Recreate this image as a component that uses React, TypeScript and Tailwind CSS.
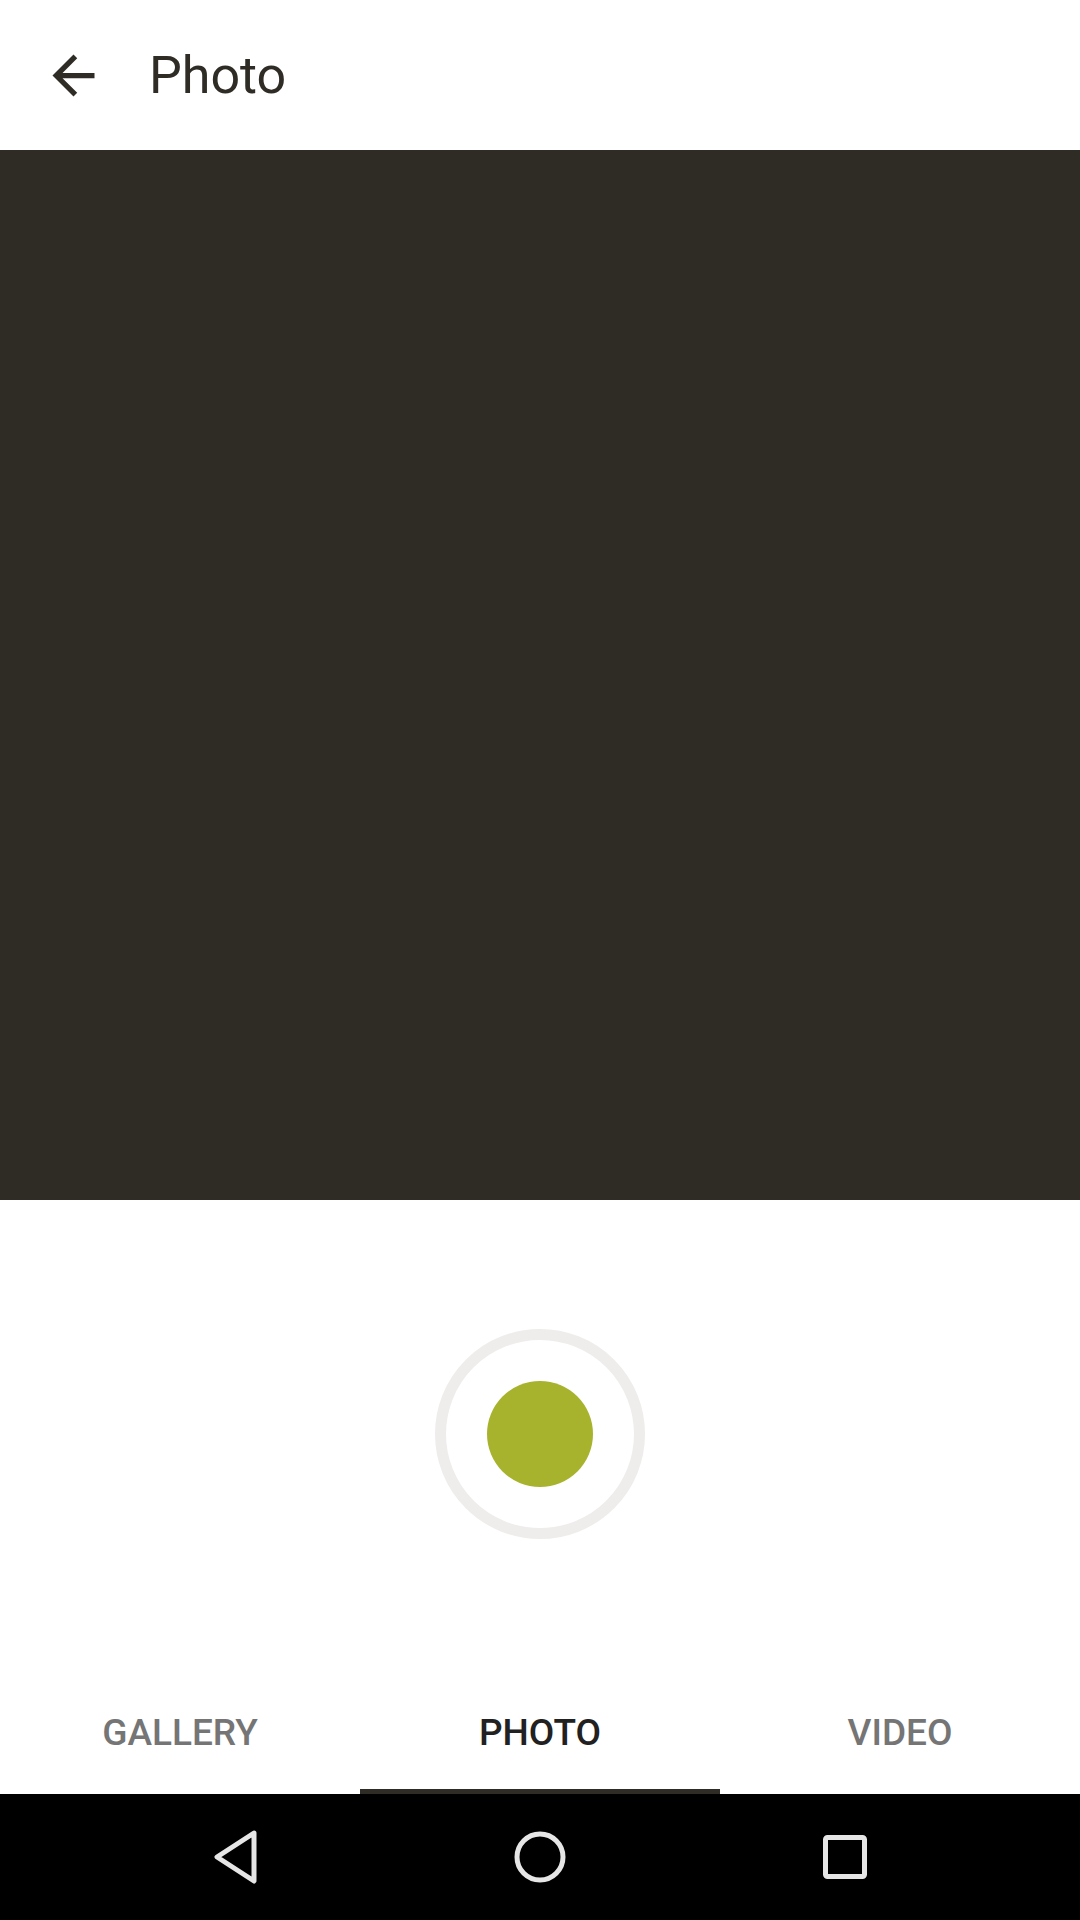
import React from "react";

export default function App() {
  return (
    <div className="w-[1080px] h-[1920px] flex flex-col bg-white overflow-hidden" style={{ fontFamily: "Roboto, 'Noto Sans', sans-serif" }}>
      <header className="h-[150px] flex items-center shrink-0 bg-white">
        <div className="w-[63px] h-[63px] ml-[42px] flex items-center justify-center">
          <svg viewBox="0 0 24 24" width="63" height="63" fill="#2f2c26">
            <path d="M20 11H7.83l5.59-5.59L12 4l-8 8 8 8 1.41-1.41L7.83 13H20v-2z" />
          </svg>
        </div>
        <h1 className="ml-[44px] text-[52px] leading-none text-[#2f2c26] font-normal pt-[2px]">Photo</h1>
      </header>
      <div className="h-[1050px] shrink-0 bg-[#2f2c26]" />
      <div className="flex-1 flex items-center justify-center bg-white">
        <div className="w-[210px] h-[210px] rounded-full border-[11px] border-[#eeedeb] flex items-center justify-center">
          <div className="w-[106px] h-[106px] rounded-full bg-[#a8b32d]" />
        </div>
      </div>
      <div className="h-[126px] shrink-0 grid grid-cols-3 bg-white">
        <div className="flex items-center justify-center pt-[3px]">
          <span className="text-[37px] font-medium leading-none text-[#757575]">GALLERY</span>
        </div>
        <div className="flex flex-col">
          <div className="flex-1 flex items-center justify-center pt-[8px]">
            <span className="text-[37px] font-medium leading-none text-[#212121]">PHOTO</span>
          </div>
          <div className="h-[5px] bg-[#2f2c26]" />
        </div>
        <div className="flex items-center justify-center pt-[3px]">
          <span className="text-[37px] font-medium leading-none text-[#757575]">VIDEO</span>
        </div>
      </div>
      <nav className="h-[126px] shrink-0 bg-black grid grid-cols-3">
        <div className="flex items-center justify-start pl-[213px]">
          <svg width="52" height="58" viewBox="0 0 52 58" fill="none" stroke="#e6e6e6" strokeWidth="5" strokeLinejoin="round" strokeLinecap="round">
            <path d="M41 5 L4 29 L41 53 Z" />
          </svg>
        </div>
        <div className="flex items-center justify-center">
          <svg width="56" height="56" viewBox="0 0 56 56" fill="none" stroke="#e6e6e6" strokeWidth="5">
            <circle cx="28" cy="28" r="23" />
          </svg>
        </div>
        <div className="flex items-center justify-start pl-[100px]">
          <svg width="50" height="50" viewBox="0 0 50 50" fill="none" stroke="#e6e6e6" strokeWidth="5">
            <rect x="5.5" y="5.5" width="39" height="39" rx="2" />
          </svg>
        </div>
      </nav>
    </div>
  );
}
